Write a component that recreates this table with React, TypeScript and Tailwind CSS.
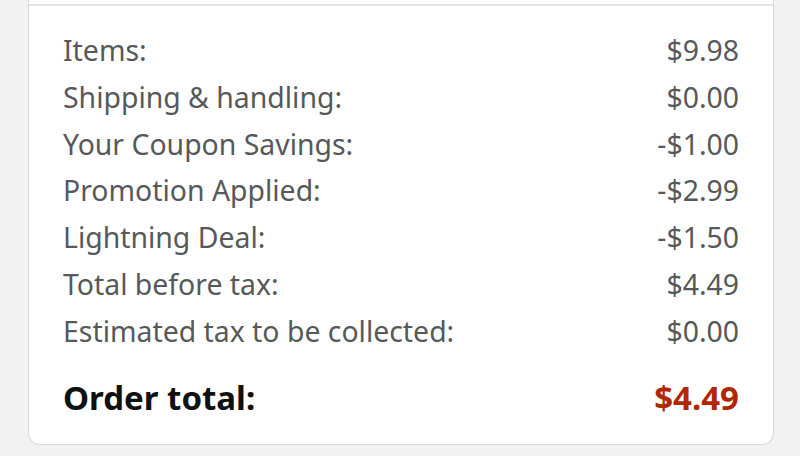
const rows = [
  { label: 'Items:', value: '$9.98' },
  { label: 'Shipping & handling:', value: '$0.00' },
  { label: 'Your Coupon Savings:', value: '-$1.00' },
  { label: 'Promotion Applied:', value: '-$2.99' },
  { label: 'Lightning Deal:', value: '-$1.50' },
  { label: 'Total before tax:', value: '$4.49' },
  { label: 'Estimated tax to be collected:', value: '$0.00' },
];

export default function App() {
  return (
    <div className="w-[800px] h-[456px] overflow-hidden bg-[#f2f2f2] font-['Noto_Sans',sans-serif]">
      <div className="ml-[28px] w-[746px] bg-white border-x border-b border-[#d9d9d9] rounded-b-[12px]">
        {/* top of the card is scrolled off, only the divider shows */}
        <div className="h-[4px]" />
        <div className="border-t-2 border-[#e3e3e3] px-[34px] pt-[21px] pb-[22px]">
          {rows.map((row) => (
            <div
              key={row.label}
              className="flex items-center justify-between h-[46.8px] text-[28.4px] text-[#565959]"
            >
              <span>{row.label}</span>
              <span>{row.value}</span>
            </div>
          ))}
          <div className="flex items-center justify-between h-[47px] mt-[20px] text-[33px] font-bold">
            <span className="text-[#0f1111]">Order total:</span>
            <span className="text-[#b12704]">$4.49</span>
          </div>
        </div>
      </div>
    </div>
  );
}
